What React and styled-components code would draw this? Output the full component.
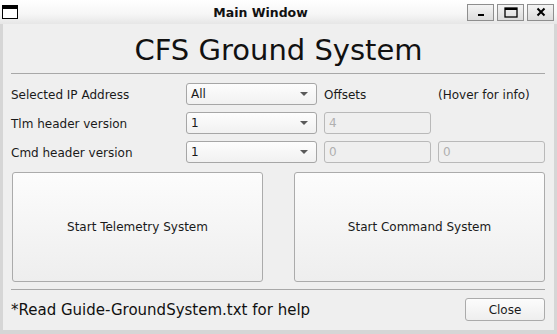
import React from "react";
import styled, { createGlobalStyle } from "styled-components";

const Global = createGlobalStyle`
  html, body { margin: 0; padding: 0; overflow: hidden; background: #efefef; }
  * { box-sizing: border-box; }
`;

const Window = styled.div`
  width: 557px;
  height: 334px;
  display: flex;
  flex-direction: column;
  font-family: "DejaVu Sans", "Liberation Sans", sans-serif;
  color: #1a1a1a;
`;

const TitleBar = styled.div`
  height: 24px;
  display: flex;
  align-items: center;
  background: linear-gradient(#ffffff, #f6f6f6 60%, #e6e6e6);
  padding: 0 3px 0 2px;
`;

const AppIcon = styled.div`
  width: 16px;
  height: 14px;
  border: 1.5px solid #000;
  border-top-width: 4px;
  background: #fff;
`;

const TitleText = styled.div`
  flex: 1;
  text-align: center;
  font-weight: bold;
  font-size: 12.5px;
  color: #111;
  padding-left: 36px;
`;

const WinButtons = styled.div`
  display: flex;
  gap: 3px;
`;

const WinButton = styled.div`
  width: 27px;
  height: 17px;
  border: 1px solid #8e8e8e;
  background: linear-gradient(#f4f4f4, #dcdcdc);
  display: flex;
  align-items: center;
  justify-content: center;
`;

const Body = styled.div`
  flex: 1;
  background: #efefef;
  border: 3px solid #d6d6d6;
  border-top: none;
  border-bottom-width: 4px;
  padding: 0 8px;
  display: flex;
  flex-direction: column;
`;

const Heading = styled.h1`
  margin: 0;
  height: 49px;
  line-height: 52px;
  font-weight: normal;
  font-size: 29px;
  text-align: center;
  color: #111;
`;

const Divider = styled.hr`
  margin: ${(p) => p.$top || 0}px 0 0 0;
  border: none;
  border-top: 1px solid #a8a8a8;
  height: 1px;
  width: 534px;
`;

const Form = styled.div`
  display: grid;
  grid-template-columns: 168px 131px 107px 107px;
  grid-auto-rows: 22px;
  column-gap: 7px;
  row-gap: 7px;
  margin-top: 9px;
  align-items: center;
`;

const Label = styled.div`
  font-size: 12px;
  color: #1a1a1a;
  white-space: nowrap;
  padding-top: 1px;
`;

const Combo = styled.div`
  height: 22px;
  border: 1px solid #a6a6a6;
  border-radius: 3px;
  background: linear-gradient(#fdfdfd, #f1f1f1);
  display: flex;
  align-items: center;
  justify-content: space-between;
  padding: 0 8px 0 4px;
  font-size: 12px;
`;

const Arrow = styled.div`
  width: 0;
  height: 0;
  border-left: 4px solid transparent;
  border-right: 4px solid transparent;
  border-top: 4px solid #5a5a5a;
`;

const Field = styled.div`
  height: 22px;
  border: 1px solid #b9b9b9;
  border-radius: 3px;
  background: #efefef;
  color: #b0b0b0;
  display: flex;
  align-items: center;
  padding: 0 4px;
  font-size: 12px;
`;

const BigRow = styled.div`
  display: flex;
  justify-content: space-between;
  margin: 9px 1px 0 1px;
`;

const BigButton = styled.button`
  width: 251px;
  height: 110px;
  border: 1px solid #ababab;
  border-radius: 3px;
  background: linear-gradient(#fcfcfc, #eeeeee);
  font-family: inherit;
  font-size: 12px;
  color: #1a1a1a;
  padding: 0;
`;

const Footer = styled.div`
  display: flex;
  align-items: center;
  justify-content: space-between;
  margin-top: 8px;
  padding-right: 1px;
`;

const FooterText = styled.div`
  font-size: 15px;
  color: #111;
`;

const CloseButton = styled.button`
  width: 80px;
  height: 23px;
  border: 1px solid #ababab;
  border-radius: 3px;
  background: linear-gradient(#fcfcfc, #eeeeee);
  font-family: inherit;
  font-size: 12px;
  color: #1a1a1a;
  padding: 0;
`;

export default function App() {
  return (
    <>
      <Global />
      <Window>
        <TitleBar>
          <AppIcon />
          <TitleText>Main Window</TitleText>
          <WinButtons>
            <WinButton>
              <svg width="10" height="10" viewBox="0 0 10 10">
                <rect x="2" y="7" width="6" height="2" fill="#000" />
              </svg>
            </WinButton>
            <WinButton>
              <svg width="14" height="11" viewBox="0 0 14 11">
                <rect x="1" y="1" width="12" height="9" fill="none" stroke="#000" strokeWidth="1.3" />
                <rect x="1" y="1" width="12" height="2" fill="#000" />
              </svg>
            </WinButton>
            <WinButton>
              <svg width="10" height="10" viewBox="0 0 10 10">
                <path d="M1.5 1.5 L8.5 8.5 M8.5 1.5 L1.5 8.5" stroke="#000" strokeWidth="2" />
              </svg>
            </WinButton>
          </WinButtons>
        </TitleBar>
        <Body>
          <Heading>CFS Ground System</Heading>
          <Divider />
          <Form>
            <Label>Selected IP Address</Label>
            <Combo>All<Arrow /></Combo>
            <Label>Offsets</Label>
            <Label>(Hover for info)</Label>

            <Label>Tlm header version</Label>
            <Combo>1<Arrow /></Combo>
            <Field>4</Field>
            <div />

            <Label>Cmd header version</Label>
            <Combo>1<Arrow /></Combo>
            <Field>0</Field>
            <Field>0</Field>
          </Form>
          <BigRow>
            <BigButton>Start Telemetry System</BigButton>
            <BigButton>Start Command System</BigButton>
          </BigRow>
          <Divider $top={7} />
          <Footer>
            <FooterText>*Read Guide-GroundSystem.txt for help</FooterText>
            <CloseButton>Close</CloseButton>
          </Footer>
        </Body>
      </Window>
    </>
  );
}
